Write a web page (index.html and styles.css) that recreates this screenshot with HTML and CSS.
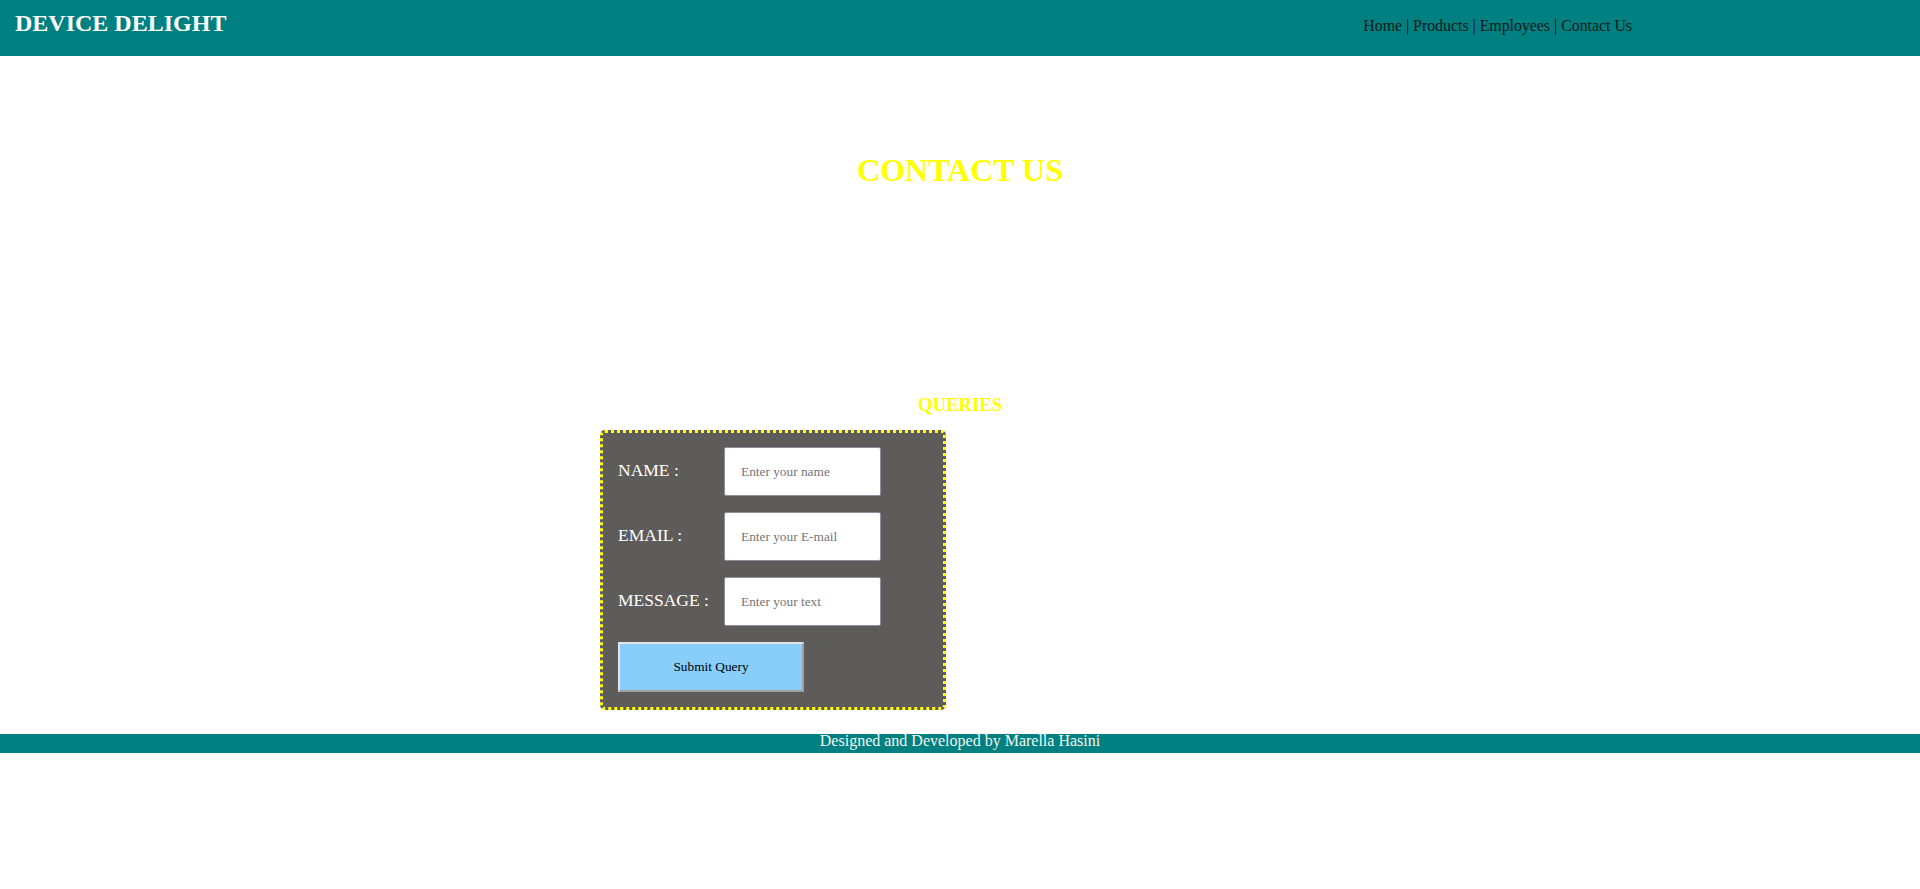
FILE: index.html
```html
<!DOCTYPE html>
<html lang="en">
<head>
<meta charset="utf-8">
<title>Contact Us - Device Delight</title>
<link rel="stylesheet" href="styles.css">
</head>
<body>
<header class="topbar">
  <h2 class="brand">DEVICE DELIGHT</h2>
  <nav class="menu">
    <a class="menu-link" href="#">Home</a> | <a class="menu-link" href="#">Products</a> | <a class="menu-link" href="#">Employees</a> | <a class="menu-link" href="#">Contact Us</a>
  </nav>
</header>
<main class="page">
  <h1 class="page-title">CONTACT US</h1>
  <h3 class="section-title">QUERIES</h3>
  <form class="query-form">
    <label class="field-label" for="name">NAME :</label>
    <input class="field-input" id="name" type="text" placeholder="Enter your name">
    <label class="field-label" for="email">EMAIL :</label>
    <input class="field-input" id="email" type="text" placeholder="Enter your E-mail">
    <label class="field-label" for="msg">MESSAGE :</label>
    <input class="field-input" id="msg" type="text" placeholder="Enter your text">
    <button class="submit-btn" type="button">Submit Query</button>
  </form>
</main>
<footer class="footer">Designed and Developed by Marella Hasini</footer>
</body>
</html>
```
FILE: styles.css
```css
html, body {
  margin: 0;
  padding: 0;
  background: #ffffff;
  font-family: "Liberation Serif", "Times New Roman", serif;
}

.topbar {
  display: flex;
  align-items: flex-start;
  height: 56px;
  background: #008080;
}

.brand {
  margin: 0;
  padding: 9px 0 0 15px;
  font-size: 24px;
  line-height: 28px;
  font-weight: bold;
  color: #ffffff;
}

.menu {
  margin-left: auto;
  margin-right: 288px;
  padding-top: 16px;
  font-size: 15.85px;
  line-height: 19px;
  color: #00003a;
}

.menu-link {
  color: #0a1a1a;
  text-decoration: none;
}

.page {
  display: flex;
  flex-direction: column;
}

.page-title {
  margin: 96px 0 0;
  font-size: 32px;
  line-height: 37px;
  font-weight: bold;
  text-align: center;
  color: #ffff00;
}

.section-title {
  margin: 205px 0 14px;
  font-size: 18.72px;
  line-height: 22px;
  font-weight: bold;
  text-align: center;
  color: #ffff00;
}

.query-form {
  box-sizing: border-box;
  width: 346px;
  margin-left: 600px;
  padding: 14px 15px 15px;
  background: #5e5c5a;
  border: 3px dotted #ffff00;
  border-radius: 5px;
  display: grid;
  grid-template-columns: 106px 157px;
  row-gap: 16px;
  align-items: center;
}

.field-label {
  font-size: 17.5px;
  line-height: 20px;
  padding-bottom: 4px;
  color: #ffffff;
}

.field-input {
  box-sizing: border-box;
  width: 157px;
  height: 49px;
  margin: 0;
  padding: 0 16px;
  border: 1px solid #8f8f9d;
  border-radius: 2px;
  background: #ffffff;
  font-family: "Liberation Serif", "Times New Roman", serif;
  font-size: 13.33px;
  color: #000000;
}

.field-input::placeholder {
  color: #757575;
}

.submit-btn {
  grid-column: 1 / span 2;
  justify-self: start;
  box-sizing: border-box;
  width: 186px;
  height: 50px;
  margin: 0;
  background: #87cefa;
  border: 2px solid;
  border-color: #e4e4e4 #a0a0a0 #a0a0a0 #e4e4e4;
  font-family: "Liberation Serif", "Times New Roman", serif;
  font-size: 13.33px;
  color: #000000;
}

.footer {
  margin-top: 24px;
  padding-bottom: 5px;
  background: #008080;
  color: #f5f5f0;
  text-align: center;
  font-size: 16px;
  line-height: 14px;
}
```
